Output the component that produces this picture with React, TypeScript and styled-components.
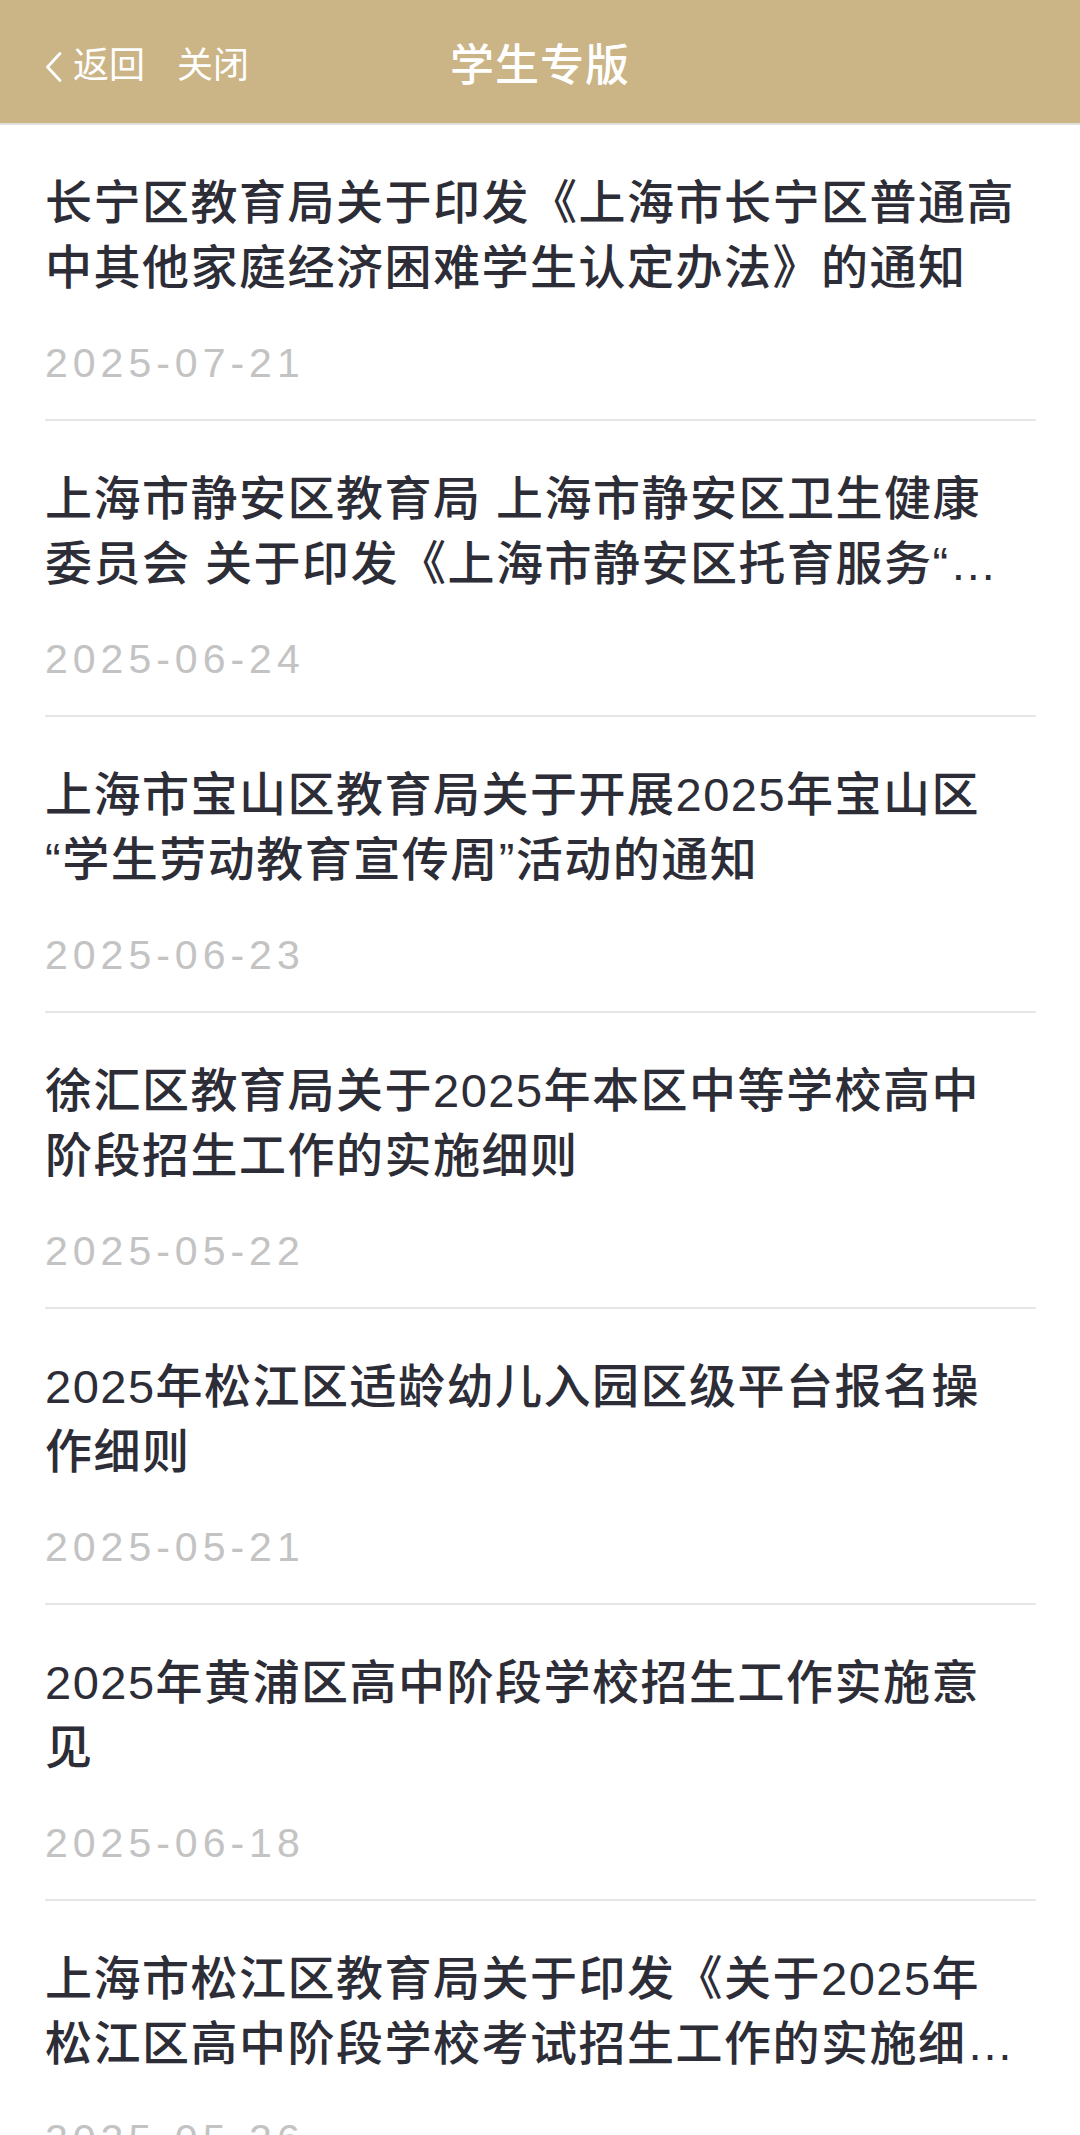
import * as React from 'react';
import styled, { createGlobalStyle } from 'styled-components';

interface NewsItem {
	title: string;
	date: string;
}

// \u200B lets the line break before an opening quote, like the iOS renderer does
const news: NewsItem[] = [
	{
		title: '长宁区教育局关于印发《上海市长宁区普通高中其他家庭经济困难学生认定办法》的通知',
		date: '2025-07-21',
	},
	{
		title: '上海市静安区教育局 上海市静安区卫生健康委员会 关于印发《上海市静安区托育服务“幼有善育”质量提升行动方案》的通知',
		date: '2025-06-24',
	},
	{
		title: '上海市宝山区教育局关于开展2025年宝山区\u200B“学生劳动教育宣传周”活动的通知',
		date: '2025-06-23',
	},
	{
		title: '徐汇区教育局关于2025年本区中等学校高中阶段招生工作的实施细则',
		date: '2025-05-22',
	},
	{
		title: '2025年松江区适龄幼儿入园区级平台报名操作细则',
		date: '2025-05-21',
	},
	{
		title: '2025年黄浦区高中阶段学校招生工作实施意见',
		date: '2025-06-18',
	},
	{
		title: '上海市松江区教育局关于印发《关于2025年松江区高中阶段学校考试招生工作的实施细则》的通知',
		date: '2025-05-26',
	},
];

const GlobalStyle = createGlobalStyle`
	html, body {
		margin: 0;
		padding: 0;
		background: #fff;
	}
	body {
		font-family: 'Liberation Sans', 'Noto Sans CJK SC', sans-serif;
	}
`;

const Page = styled.div`
	width: 1080px;
	background: #fff;
`;

const Header = styled.header`
	display: grid;
	grid-template-columns: 1fr auto 1fr;
	align-items: center;
	height: 123px;
	background: #cbb486;
	border-bottom: 2px solid #e2e0dc;
	color: #fff;
	font-family: 'Noto Sans CJK SC', sans-serif;
`;

const NavLeft = styled.div`
	display: flex;
	align-items: center;
	padding-left: 46px;
`;

const NavButton = styled.span<{ $gap?: number }>`
	font-size: 36px;
	line-height: 40px;
	font-weight: 400;
	margin-left: ${(p) => p.$gap ?? 0}px;
`;

const Chevron = styled.svg`
	width: 16px;
	height: 30px;
	flex: 0 0 auto;
	margin-top: 10px;
`;

const HeaderTitle = styled.h1`
	margin: 0;
	font-size: 44px;
	line-height: 50px;
	font-weight: 500;
	letter-spacing: 1px;
`;

const List = styled.ul`
	list-style: none;
	margin: 0;
	padding: 0 44px 0 45px;
`;

const Row = styled.li`
	padding: 45px 0 34px;
	border-bottom: 2px solid #e6e6e6;
`;

const Title = styled.div`
	margin-right: 13px;
	font-size: 47px;
	line-height: 65px;
	letter-spacing: 1.5px;
	font-weight: 500;
	color: #2d2d37;
	display: -webkit-box;
	-webkit-box-orient: vertical;
	-webkit-line-clamp: 2;
	overflow: hidden;
`;

const DateText = styled.div`
	margin-top: 41px;
	font-family: 'Liberation Sans', sans-serif;
	font-size: 41px;
	line-height: 44px;
	letter-spacing: 5px;
	color: #c3c3c3;
`;

const NewsRow = ({ item }: { item: NewsItem }) => (
	<Row>
		<Title>{item.title}</Title>
		<DateText>{item.date}</DateText>
	</Row>
);

export default function App() {
	return (
		<Page>
			<GlobalStyle />
			<Header>
				<NavLeft>
					<Chevron viewBox="0 0 16 30">
						<path d="M14 1.5 L1.5 15 L14 28.5" fill="none" stroke="#fff" strokeWidth="2.8" strokeLinecap="round" strokeLinejoin="round" />
					</Chevron>
					<NavButton $gap={11}>返回</NavButton>
					<NavButton $gap={32}>关闭</NavButton>
				</NavLeft>
				<HeaderTitle>学生专版</HeaderTitle>
				<div />
			</Header>
			<List>
				{news.map((item, i) => (
					<NewsRow key={'news-' + i} item={item} />
				))}
			</List>
		</Page>
	);
}
